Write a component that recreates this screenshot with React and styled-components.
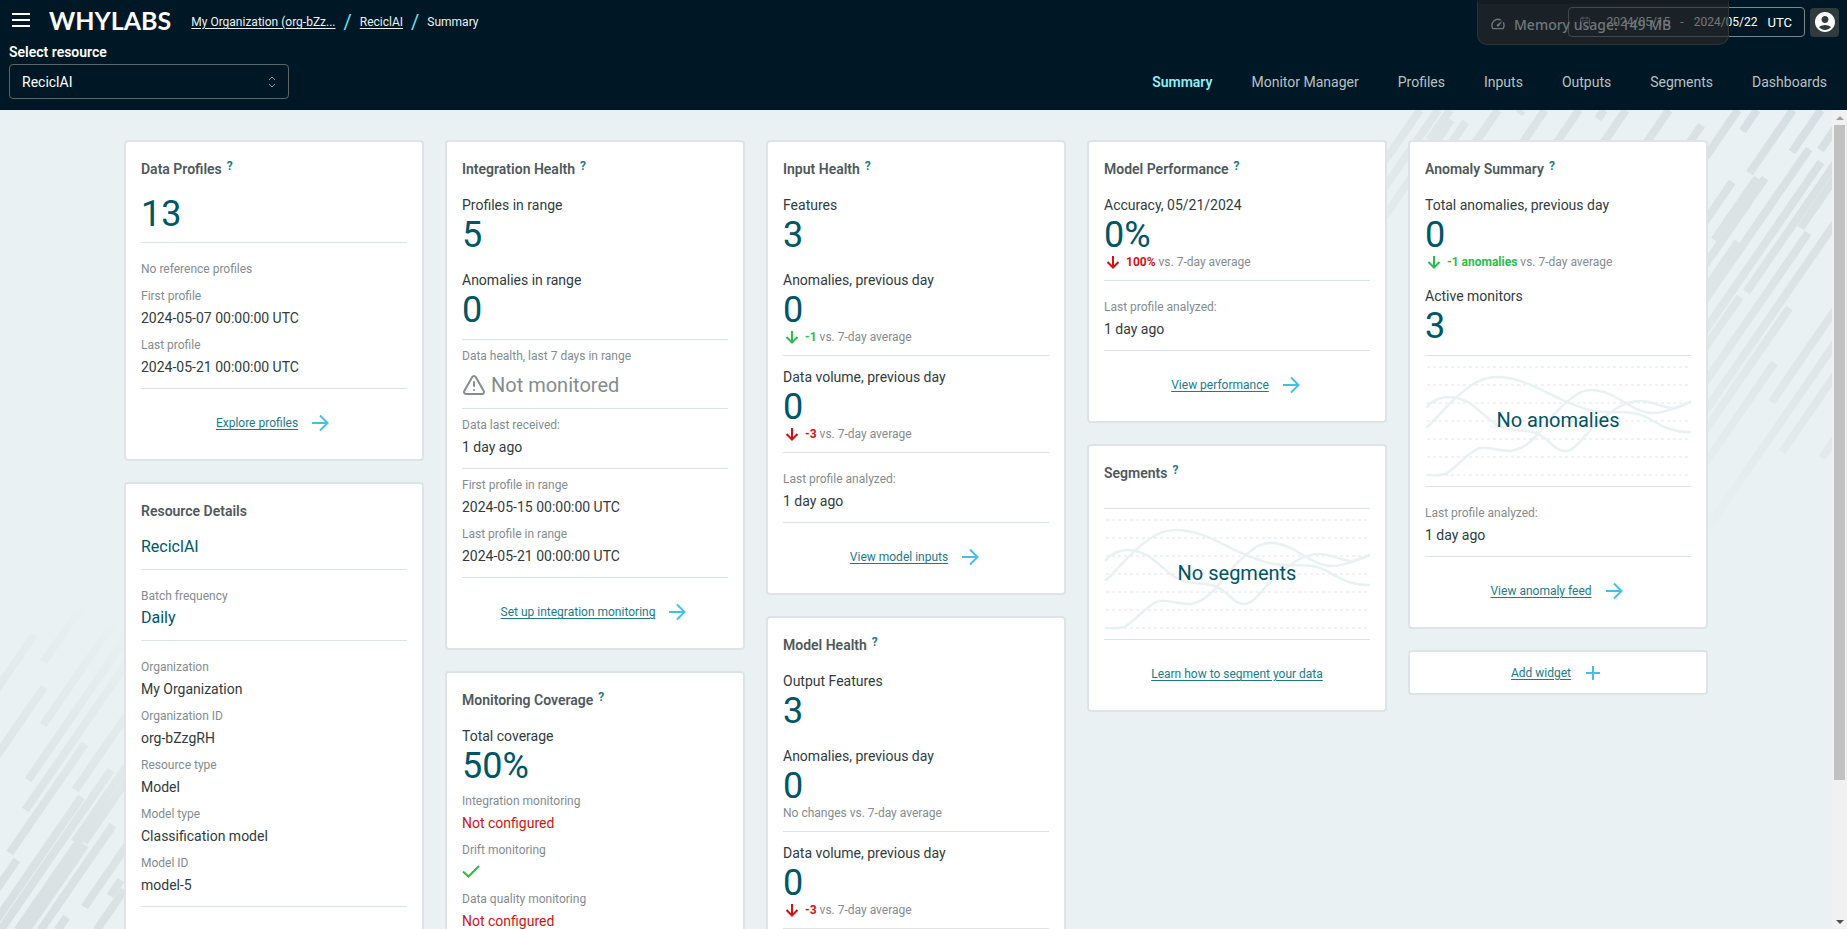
import React from "react";
import styled, { createGlobalStyle } from "styled-components";
import { TriangleAlert, Calendar } from "lucide-react";
import { MdAccountCircle, MdOutlineSpeed } from "react-icons/md";

const color = {
  night: "#001825",
  page: "#e9f1f3",
  line: "#dbe5e7",
  ink: "#313b3d",
  title: "#4f595b",
  muted: "#848c8f",
  brand: "#005566",
  link: "#1d7a8a",
  sky: "#44c0e7",
  aqua: "#8df0f7",
  green: "#2bbb4e",
  red: "#d01217",
};

const GlobalStyle = createGlobalStyle`
  * { box-sizing: border-box; }
  body {
    margin: 0;
    overflow: hidden;
    font-family: Roboto, "Liberation Sans", sans-serif;
    font-size: 14px;
    color: ${color.ink};
  }
  h2, p { margin: 0; padding: 0; }
  svg { display: block; flex: none; }
`;

const Page = styled.div`
  display: flex;
  flex-direction: column;
  height: 100vh;
`;

/* ---------- header ---------- */

const Header = styled.header`
  position: relative;
  flex: none;
  background: ${color.night};
  color: #fff;
  padding: 0 8px 11px 9px;
`;

const TopRow = styled.div`
  display: flex;
  align-items: center;
  height: 44px;
`;

const MenuButton = styled.button`
  width: 24px;
  height: 24px;
  margin: 0 16px 4px 0;
  padding: 0;
  border: 0;
  background: none;
  color: #fff;
`;

const Logo = styled.a`
  margin: 0 20px 4px 0;
  font: 700 25px/28px Lato, sans-serif;
  color: #fff;
  text-decoration: none;
`;

const Breadcrumb = styled.nav`
  display: flex;
  align-items: center;
  gap: 8px;
  font-size: 12px;
  color: #e9f1f3;
  a { color: inherit; text-underline-offset: 2px; }
`;

const Slash = styled.span`
  font-size: 20px;
  line-height: 24px;
  color: #69e2ee;
`;

const DateRange = styled.button`
  display: flex;
  align-items: center;
  gap: 10px;
  height: 30px;
  margin: 0 5px 0 auto;
  padding: 0 12px 0 10px;
  border: 1px solid #7d8688;
  border-radius: 4px;
  background: none;
  color: #fff;
  font: 12px Roboto, sans-serif;
  svg { margin-right: 5px; }
`;

const Zone = styled.span`
  font-size: 13px;
`;

const Avatar = styled.button`
  display: grid;
  place-items: center;
  width: 29px;
  height: 29px;
  padding: 0;
  border: 0;
  border-radius: 4px;
  background: #313b3d;
  color: #fff;
`;

const MemoryBadge = styled.div`
  position: absolute;
  top: 0;
  right: 118px;
  display: flex;
  align-items: center;
  gap: 8px;
  width: 252px;
  height: 45px;
  padding: 0 12px;
  border: 1px solid #2c3438;
  border-top: 4px solid #151c22;
  border-radius: 0 0 10px 10px;
  background: rgba(40, 40, 40, 0.65);
  color: #70777b;
  font: 500 14px "Noto Sans", sans-serif;
`;

const ToolRow = styled.div`
  display: flex;
  align-items: flex-end;
  justify-content: space-between;
`;

const ResourceField = styled.label`
  display: flex;
  flex-direction: column;
  gap: 4px;
  width: 280px;
  font-weight: 600;
  line-height: 16px;
`;

const SelectBox = styled.span`
  display: grid;
  align-items: center;
  select, svg { grid-area: 1 / 1; }
  svg { justify-self: end; margin-right: 12px; pointer-events: none; }
`;

const Select = styled.select`
  appearance: none;
  width: 100%;
  height: 35px;
  padding: 0 12px;
  border: 1px solid #5b6466;
  border-radius: 4px;
  background: ${color.night};
  color: #fff;
  font: 14px Roboto, sans-serif;
`;

const Tabs = styled.nav`
  display: flex;
  align-items: center;
  gap: 39px;
  height: 35px;
  padding-right: 12px;
`;

const Tab = styled.a`
  color: ${(p) => (p.$active ? color.aqua : "#b9c0c3")};
  font-weight: ${(p) => (p.$active ? 600 : 400)};
  text-decoration: none;
`;

/* ---------- page body ---------- */

const Body = styled.div`
  display: flex;
  flex: 1;
  min-height: 0;
`;

const Canvas = styled.div`
  position: relative;
  flex: 1;
  min-width: 0;
  background: ${color.page};
`;

const Streaks = styled.svg`
  position: absolute;
  ${(p) => (p.$side === "right" ? "top: 0; right: 0;" : "bottom: 0; left: 0;")}
`;

const Scroller = styled.main`
  position: relative;
  height: 100%;
  overflow-y: auto;
  scrollbar-width: none;
  display: grid;
  grid-template-columns: repeat(5, 300px);
  justify-content: center;
  align-items: start;
  gap: 21px;
  padding: 30px 0;
`;

const Column = styled.div`
  display: flex;
  flex-direction: column;
  gap: 21px;
`;

const ScrollRail = styled.div`
  display: flex;
  flex-direction: column;
  align-items: center;
  flex: none;
  width: 15px;
  background: #f1f1f1;
`;

const ScrollThumb = styled.div`
  flex: 0 0 80%;
  width: 11px;
  margin: 0 0 auto;
  background: #c1c1c1;
`;

const RailArrow = styled.svg`
  width: 15px;
  height: 15px;
`;

/* ---------- cards ---------- */

const CardBox = styled.section`
  min-height: ${(p) => p.$minHeight || 0}px;
  padding: 15px;
  border: 2px solid ${color.line};
  border-radius: 4px;
  background: #fff;
`;

const TitleRow = styled.div`
  display: flex;
  align-items: center;
  gap: 5px;
  height: 24px;
`;

const Title = styled.h2`
  font-size: 14px;
  font-weight: 600;
  color: ${color.title};
`;

const HelpButton = styled.button`
  align-self: flex-start;
  padding: 0;
  border: 0;
  background: none;
  color: ${color.link};
  font: 700 12px/18px Roboto, sans-serif;
`;

const Section = styled.div`
  padding: ${(p) => p.$top}px 0 ${(p) => p.$bottom}px;
  border-bottom: ${(p) => (p.$open ? 0 : 1)}px solid ${color.line};
`;

const Label = styled.p`
  margin-top: ${(p) => p.$gap || 0}px;
  line-height: 20px;
`;

const Figure = styled.p`
  padding-top: 1px;
  font-size: 36px;
  line-height: 39px;
  color: ${color.brand};
`;

const Small = styled.p`
  margin-top: ${(p) => p.$gap || 0}px;
  font-size: 12px;
  line-height: ${(p) => (p.$tight ? 14 : 16)}px;
  color: ${color.muted};
`;

const Value = styled.p`
  margin-top: 4px;
  font-size: ${(p) => (p.$large ? 16 : 14)}px;
  line-height: 20px;
  color: ${(p) => p.$tone || color.ink};
  svg { height: 20px; }
`;

const DeltaRow = styled.p`
  display: flex;
  align-items: center;
  gap: 4px;
  height: 14px;
  font-size: 12px;
  color: ${color.muted};
  svg, strong { color: ${(p) => p.$tone}; }
`;

const Status = styled.p`
  display: flex;
  align-items: center;
  gap: 5px;
  margin-top: 9px;
  font-size: 20px;
  line-height: 24px;
  color: ${color.muted};
`;

const Footer = styled.div`
  display: flex;
  align-items: center;
  justify-content: center;
  gap: 10px;
  height: 20px;
  margin: 24px 0 11px;
  font-size: 12px;
`;

const Link = styled.a`
  color: ${color.link};
  text-underline-offset: 2px;
`;

const AddBox = styled.section`
  display: flex;
  align-items: center;
  justify-content: center;
  gap: 10px;
  height: 45px;
  border: 2px solid ${color.line};
  border-radius: 4px;
  background: #fff;
  font-size: 12px;
`;

const EmptyChart = styled.div`
  display: grid;
  place-items: center;
  height: 131px;
  border-bottom: 1px solid ${color.line};
  svg, p { grid-area: 1 / 1; }
  p { padding-bottom: 2px; font-size: 20px; color: ${color.brand}; }
`;

/* ---------- drawings ---------- */

const ArrowRight = () => (
  <svg width="24" height="24" fill="none" stroke={color.sky} strokeWidth="2" aria-hidden="true">
    <path d="M4 12h15.500M12 4.500l7.500 7.500-7.500 7.500" />
  </svg>
);

const Plus = () => (
  <svg width="24" height="24" fill="none" stroke={color.sky} strokeWidth="2" aria-hidden="true">
    <path d="M5 12h14M12 5v14" />
  </svg>
);

const ArrowDown = () => (
  <svg width="18" height="14" fill="none" stroke="currentColor" strokeWidth="2" aria-hidden="true">
    <path d="M9 1v11.500M3.500 7L9 12.500 14.500 7" />
  </svg>
);

const Check = () => (
  <svg width="18" height="20" fill="none" stroke={color.green} strokeWidth="2" role="img" aria-label="Configured">
    <path d="M1 9.500l5.500 5L17 4" />
  </svg>
);

const Waves = () => (
  <svg width="266" height="130" fill="none" aria-hidden="true">
    {[0, 1, 2, 3, 4, 5, 6].map((i) => (
      <path key={i} d={`M2 ${11 + i * 18}H264`} stroke="#e3e6e7" strokeDasharray="3 3" />
    ))}
    <g stroke={color.page} strokeWidth="2.500" strokeLinecap="round">
      <path d="M2 71C14 60 22 49 34 39C48 27 58 21 72 21C98 21 120 37 142 46C160 53 166 56 184 56C196 57 202 55 213 58C230 63 240 77 266 76" />
      <path d="M2 51C8 44 14 41 24 41C48 42 56 60 74 70C88 77 100 72 113 78C125 84 130 95 140 95C152 95 160 76 178 62C192 51 202 45 215 45C230 45 238 53 250 52C256 51 260 48 266 46" />
      <path d="M2 119C8 119 14 120 20 118C32 112 42 96 55 92C66 90 74 96 87 95C112 90 122 60 142 46C150 39 156 34 167 34C190 34 206 57 228 57C242 57 254 50 266 46" />
    </g>
  </svg>
);

/* Each streak: x where it would cross the top edge, then its start and end y. */
const SLOPE = 0.69;
const rightStreaks = [
  [88, 0, 260], [106, 0, 240], [118, 0, 30], [126, 10, 250], [142, 12, 60], [166, 0, 60],
  [190, 0, 4], [213, 0, 60], [247, 0, 60], [272, 0, 9], [294, 0, 60], [337, 0, 60],
  [380, 15, 60], [406, 0, 60], [425, 0, 21], [450, 72, 330], [461, 0, 63], [472, 68, 130],
  [480, 68, 300], [489, 0, 42], [497, 132, 340], [504, 39, 330], [516, 0, 40], [525, 52, 360],
  [540, 45, 182], [550, 40, 118], [537, 187, 340], [561, 123, 370], [581, 100, 380],
  [594, 198, 400], [617, 253, 430], [641, 150, 292], [664, 220, 420], [686, 240, 342], [730, 300, 348],
];
const leftStreaks = [
  [148, 165, 260], [176, 90, 192], [194, 217, 330], [219, 120, 255], [242, 130, 310],
  [260, 150, 340], [274, 274, 383], [296, 180, 320], [307, 327, 460], [318, 300, 460],
  [331, 290, 372], [341, 300, 372], [286, 390, 440], [344, 375, 460], [358, 360, 460],
  [375, 447, 460], [358, 355, 440], [386, 350, 437], [414, 420, 460], [404, 410, 426], [335, 330, 460],
];

const StreakLayer = ({ side, items, width, height, from, to }) => (
  <Streaks $side={side} width={width} height={height} aria-hidden="true">
    <defs>
      <linearGradient id={side} gradientUnits="userSpaceOnUse" x1={from[0]} y1={from[1]} x2={to[0]} y2={to[1]}>
        <stop offset="0" stopColor="#d6dfe1" />
        <stop offset="0.400" stopColor="#dde4e6" />
        <stop offset="1" stopColor={color.page} />
      </linearGradient>
    </defs>
    <g stroke={`url(#${side})`} strokeWidth="8">
      {items.map(([x, y1, y2]) => (
        <path key={`${x}-${y1}`} d={`M${x - y1 * SLOPE} ${y1}L${x - y2 * SLOPE} ${y2}`} />
      ))}
    </g>
  </Streaks>
);

/* ---------- composed parts ---------- */

const Card = ({ title, help = true, minHeight, children }) => (
  <CardBox $minHeight={minHeight}>
    <TitleRow>
      <Title>{title}</Title>
      {help && <HelpButton type="button">?</HelpButton>}
    </TitleRow>
    {children}
  </CardBox>
);

const Delta = ({ tone, amount }) => (
  <DeltaRow $tone={tone}>
    <ArrowDown />
    <span><strong>{amount}</strong> vs. 7-day average</span>
  </DeltaRow>
);

const Detail = ({ label, gap, tone, large, children }) => (
  <>
    <Small $gap={gap}>{label}</Small>
    <Value $tone={tone} $large={large}>{children}</Value>
  </>
);

const LastAnalyzed = () => (
  <Section $top={18} $bottom={11}>
    <Detail label="Last profile analyzed:">1 day ago</Detail>
  </Section>
);

const Action = ({ children, arrow = true }) => (
  <Footer>
    <Link href="#">{children}</Link>
    {arrow && <ArrowRight />}
  </Footer>
);

const tabs = ["Summary", "Monitor Manager", "Profiles", "Inputs", "Outputs", "Segments", "Dashboards"];

export default function App() {
  return (
    <Page>
      <GlobalStyle />
      <Header>
        <TopRow>
          <MenuButton type="button" aria-label="Menu">
            <svg width="24" height="24" stroke="currentColor" strokeWidth="2">
              <path d="M3 6h18M3 12h18M3 18h18" />
            </svg>
          </MenuButton>
          <Logo href="#">WHYLABS</Logo>
          <Breadcrumb aria-label="Breadcrumb">
            <a href="#">My Organization (org-bZz...</a>
            <Slash>/</Slash>
            <a href="#">ReciclAI</a>
            <Slash>/</Slash>
            <span>Summary</span>
          </Breadcrumb>
          <DateRange type="button">
            <Calendar size={12} strokeWidth={1} />
            <span>2024/05/15</span>
            <span>-</span>
            <span>2024/05/22</span>
            <Zone>UTC</Zone>
          </DateRange>
          <Avatar type="button" aria-label="Account">
            <MdAccountCircle size={24} />
          </Avatar>
        </TopRow>
        <ToolRow>
          <ResourceField>
            Select resource
            <SelectBox>
              <Select defaultValue="ReciclAI">
                <option>ReciclAI</option>
              </Select>
              <svg width="10" height="12" fill="none" stroke="#8d9597" aria-hidden="true">
                <path d="M2 4l3-3 3 3M2 8l3 3 3-3" />
              </svg>
            </SelectBox>
          </ResourceField>
          <Tabs>
            {tabs.map((t, i) => (
              <Tab key={t} href="#" $active={i === 0}>{t}</Tab>
            ))}
          </Tabs>
        </ToolRow>
        <MemoryBadge>
          <MdOutlineSpeed size={16} />
          Memory usage: 149 MB
        </MemoryBadge>
      </Header>

      <Body>
        <Canvas>
          <StreakLayer side="right" items={rightStreaks} width={500} height={440} from={[480, 0]} to={[260, 370]} />
          <StreakLayer side="left" items={leftStreaks} width={460} height={459} from={[0, 459]} to={[150, 160]} />
          <Scroller>
            <Column>
              <Card title="Data Profiles">
                <Section $top={13} $bottom={8}>
                  <Figure>13</Figure>
                </Section>
                <Section $top={18} $bottom={11}>
                  <Small>No reference profiles</Small>
                  <Detail label="First profile" gap={11}>2024-05-07 00:00:00 UTC</Detail>
                  <Detail label="Last profile" gap={9}>2024-05-21 00:00:00 UTC</Detail>
                </Section>
                <Action>Explore profiles</Action>
              </Card>
              <Card title="Resource Details" help={false} minHeight={520}>
                <Section $top={10} $bottom={12}>
                  <Value $large $tone={color.brand}>ReciclAI</Value>
                </Section>
                <Section $top={18} $bottom={12}>
                  <Detail label="Batch frequency" large tone={color.brand}>Daily</Detail>
                </Section>
                <Section $top={18} $bottom={11}>
                  <Detail label="Organization">My Organization</Detail>
                  <Detail label="Organization ID" gap={9}>org-bZzgRH</Detail>
                  <Detail label="Resource type" gap={9}>Model</Detail>
                  <Detail label="Model type" gap={9}>Classification model</Detail>
                  <Detail label="Model ID" gap={9}>model-5</Detail>
                </Section>
              </Card>
            </Column>

            <Column>
              <Card title="Integration Health">
                <Section $top={14} $bottom={9}>
                  <Label>Profiles in range</Label>
                  <Figure>5</Figure>
                  <Label $gap={15}>Anomalies in range</Label>
                  <Figure>0</Figure>
                </Section>
                <Section $top={8} $bottom={11}>
                  <Small>Data health, last 7 days in range</Small>
                  <Status><TriangleAlert size={24} strokeWidth={2} />Not monitored</Status>
                </Section>
                <Section $top={8} $bottom={11}>
                  <Detail label="Data last received:">1 day ago</Detail>
                </Section>
                <Section $top={8} $bottom={11}>
                  <Detail label="First profile in range">2024-05-15 00:00:00 UTC</Detail>
                  <Detail label="Last profile in range" gap={9}>2024-05-21 00:00:00 UTC</Detail>
                </Section>
                <Action>Set up integration monitoring</Action>
              </Card>
              <Card title="Monitoring Coverage" minHeight={330}>
                <Section $top={14} $bottom={11} $open>
                  <Label>Total coverage</Label>
                  <Figure>50%</Figure>
                  <Detail label="Integration monitoring" gap={7} tone={color.red}>Not configured</Detail>
                  <Detail label="Drift monitoring" gap={9}><Check /></Detail>
                  <Detail label="Data quality monitoring" gap={9} tone={color.red}>Not configured</Detail>
                </Section>
              </Card>
            </Column>

            <Column>
              <Card title="Input Health">
                <Section $top={14} $bottom={11}>
                  <Label>Features</Label>
                  <Figure>3</Figure>
                  <Label $gap={15}>Anomalies, previous day</Label>
                  <Figure>0</Figure>
                  <Delta tone={color.green} amount="-1" />
                </Section>
                <Section $top={11} $bottom={11}>
                  <Label>Data volume, previous day</Label>
                  <Figure>0</Figure>
                  <Delta tone={color.red} amount="-3" />
                </Section>
                <LastAnalyzed />
                <Action>View model inputs</Action>
              </Card>
              <Card title="Model Health" minHeight={400}>
                <Section $top={14} $bottom={11}>
                  <Label>Output Features</Label>
                  <Figure>3</Figure>
                  <Label $gap={15}>Anomalies, previous day</Label>
                  <Figure>0</Figure>
                  <Small $tight>No changes vs. 7-day average</Small>
                </Section>
                <Section $top={11} $bottom={11}>
                  <Label>Data volume, previous day</Label>
                  <Figure>0</Figure>
                  <Delta tone={color.red} amount="-3" />
                </Section>
              </Card>
            </Column>

            <Column>
              <Card title="Model Performance">
                <Section $top={14} $bottom={11}>
                  <Label>Accuracy, 05/21/2024</Label>
                  <Figure>0%</Figure>
                  <Delta tone={color.red} amount="100%" />
                </Section>
                <LastAnalyzed />
                <Action>View performance</Action>
              </Card>
              <Card title="Segments">
                <Section $top={23} $bottom={0} />
                <EmptyChart><Waves /><p>No segments</p></EmptyChart>
                <Action arrow={false}>Learn how to segment your data</Action>
              </Card>
            </Column>

            <Column>
              <Card title="Anomaly Summary">
                <Section $top={14} $bottom={9}>
                  <Label>Total anomalies, previous day</Label>
                  <Figure>0</Figure>
                  <Delta tone={color.green} amount="-1 anomalies" />
                  <Label $gap={17}>Active monitors</Label>
                  <Figure>3</Figure>
                </Section>
                <EmptyChart><Waves /><p>No anomalies</p></EmptyChart>
                <LastAnalyzed />
                <Action>View anomaly feed</Action>
              </Card>
              <AddBox>
                <Link href="#">Add widget</Link>
                <Plus />
              </AddBox>
            </Column>
          </Scroller>
        </Canvas>
        <ScrollRail aria-hidden="true">
          <RailArrow><path d="M4 10l4-4 4 4z" fill="#a3a3a3" /></RailArrow>
          <ScrollThumb />
          <RailArrow><path d="M4 6l4 4 4-4z" fill="#505050" /></RailArrow>
        </ScrollRail>
      </Body>
    </Page>
  );
}
